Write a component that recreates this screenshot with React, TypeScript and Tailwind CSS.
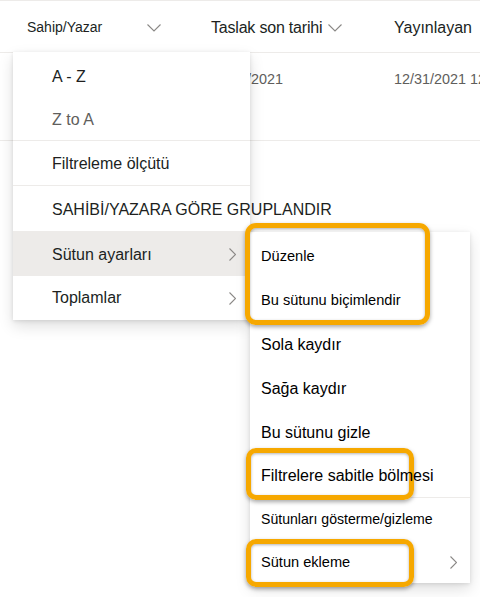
import React from "react";

const ChevDown = ({ className = "" }: { className?: string }) => (
  <svg width="14" height="8" viewBox="0 0 14 8" className={className} fill="none">
    <polyline points="0.5,0.5 7,7 13.5,0.5" stroke="#8a8886" strokeWidth="1.1" />
  </svg>
);

const ChevRight = () => (
  <svg width="7" height="13" viewBox="0 0 7 13" fill="none">
    <polyline points="0.5,0.5 6.5,6.5 0.5,12.5" stroke="#8a8886" strokeWidth="1.1" />
  </svg>
);

const Item = ({
  children,
  h,
  className = "",
  chevron = false,
  textClass = "",
}: {
  children: React.ReactNode;
  h: string;
  className?: string;
  chevron?: boolean;
  textClass?: string;
}) => (
  <div className={`flex items-center justify-between ${h} ${className}`}>
    <span className={`whitespace-nowrap ${textClass}`}>{children}</span>
    {chevron && <ChevRight />}
  </div>
);

export default function App() {
  return (
    <div className="relative w-[480px] h-[597px] overflow-hidden bg-white font-['Liberation_Sans',Arial,sans-serif] text-[#201f1e]">
      {/* header */}
      <div className="h-[53px] pt-[2px] border-t border-b border-[#edebe9] flex items-center">
        <div className="w-[211px] shrink-0 pl-[27px] flex items-center">
          <div className="w-[134px] flex items-center justify-between">
            <span className="text-[14px]">Sahip/Yazar</span>
            <ChevDown />
          </div>
        </div>
        <div className="w-[183px] shrink-0 flex items-center gap-[6px]">
          <span className="text-[16px] tracking-[-0.2px] whitespace-nowrap">Taslak son tarihi</span>
          <ChevDown />
        </div>
        <div className="flex-1 whitespace-nowrap text-[16px]">Yayınlayan</div>
      </div>
      {/* data row */}
      <div className="h-[88px] border-b border-[#edebe9] flex pt-[16px] text-[14.4px] text-[#605e5c] whitespace-nowrap">
        <div className="w-[211px] shrink-0"></div>
        <div className="w-[183px] shrink-0">12/31/2021</div>
        <div className="shrink-0">12/31/2021 12:00 AM</div>
      </div>

      {/* main menu */}
      <div className="absolute left-[13px] top-[52px] w-[237px] bg-white pt-[2px] pr-[14px] shadow-[0_6px_14px_rgba(0,0,0,0.13),0_1px_4px_rgba(0,0,0,0.11)] text-[16px]">
        <Item h="h-[45px]" className="pl-[39px] text-[#201f1e]">A - Z</Item>
        <Item h="h-[41px]" className="pl-[39px] text-[#605e5c]">Z to A</Item>
        <div className="border-t border-[#edebe9] mr-[-14px]" />
        <Item h="h-[44px]" className="pl-[39px] pt-[2px]">Filtreleme ölçütü</Item>
        <div className="border-t border-[#edebe9] mr-[-14px]" />
        <Item h="h-[45px]" className="pl-[39px] pt-[2px]">SAHİBİ/YAZARA GÖRE GRUPLANDIR</Item>
        <div className="bg-[#edebe9] mr-[-14px] pr-[14px]">
          <Item h="h-[45px]" className="pl-[39px] pt-[2px]" chevron>Sütun ayarları</Item>
        </div>
        <Item h="h-[44px]" className="pl-[39px]" chevron>Toplamlar</Item>
      </div>

      {/* sub menu */}
      <div className="absolute left-[250px] top-[232px] w-[220px] bg-white pt-[3px] pl-[11px] pr-[13px] shadow-[0_6px_14px_rgba(0,0,0,0.13),0_1px_4px_rgba(0,0,0,0.11)] text-black text-[16px]">
        <Item h="h-[44px]" className="text-[14.6px]">Düzenle</Item>
        <Item h="h-[44px]" className="text-[14.6px]">Bu sütunu biçimlendir</Item>
        <Item h="h-[44px]">Sola kaydır</Item>
        <Item h="h-[44px]">Sağa kaydır</Item>
        <Item h="h-[44px]">Bu sütunu gizle</Item>
        <Item h="h-[42px]" textClass="relative z-10">Filtrelere sabitle bölmesi</Item>
        <div className="border-t border-[#edebe9] ml-[-11px] mr-[-13px]" />
        <Item h="h-[44px]" className="text-[14.1px]">Sütunları gösterme/gizleme</Item>
        <Item h="h-[41px]" className="text-[14.6px]" chevron>Sütun ekleme</Item>
      </div>

      {/* orange highlights */}
      <div className="absolute left-[245px] top-[223px] w-[185px] h-[102px] border-[5px] border-[#f6a800] rounded-[11px] shadow-[0_2px_4px_rgba(0,0,0,0.35),inset_0_1px_3px_rgba(0,0,0,0.3)]" />
      <div className="absolute left-[246px] top-[448px] w-[168px] h-[52px] border-[5px] border-[#f6a800] rounded-[10px] shadow-[0_2px_4px_rgba(0,0,0,0.35),inset_0_1px_3px_rgba(0,0,0,0.3)]" />
      <div className="absolute left-[246px] top-[539px] w-[168px] h-[48px] border-[5px] border-[#f6a800] rounded-[10px] shadow-[0_2px_4px_rgba(0,0,0,0.35),inset_0_1px_3px_rgba(0,0,0,0.3)]" />
    </div>
  );
}
